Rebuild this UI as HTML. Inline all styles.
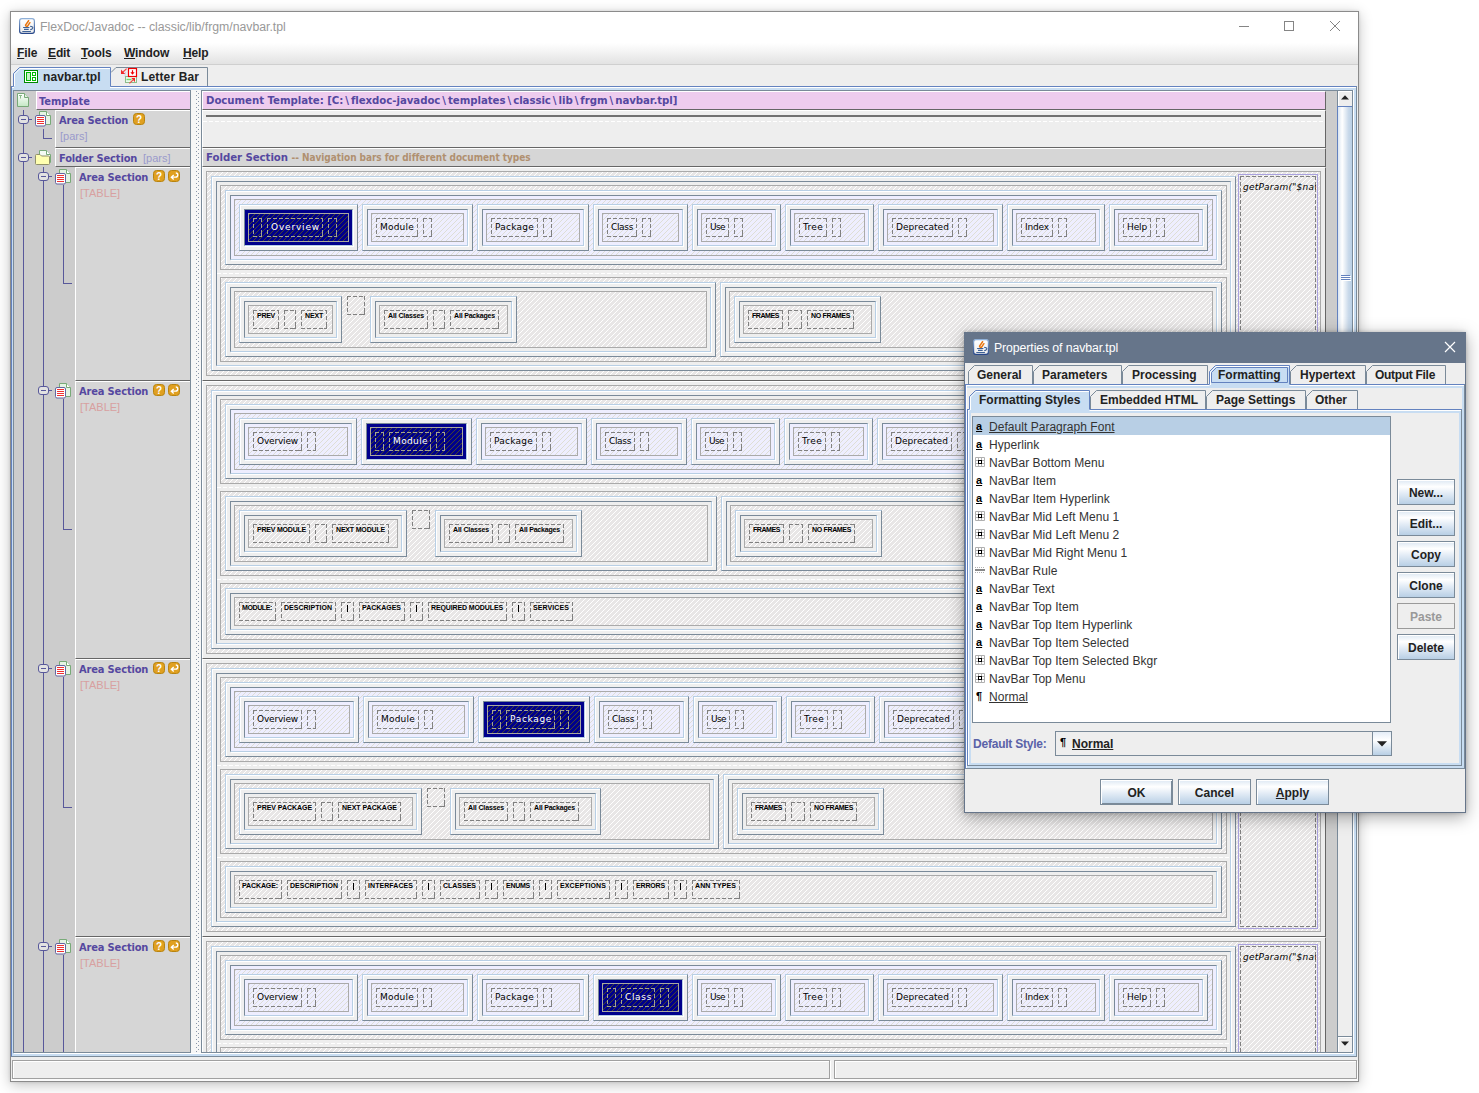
<!DOCTYPE html>
<html><head><meta charset="utf-8"><title>FlexDoc/Javadoc</title>
<style>
html,body{margin:0;padding:0;background:#fff;}
body{width:1479px;height:1093px;position:relative;overflow:hidden;font-family:"Liberation Sans",sans-serif;font-size:12px;color:#333}
.a{position:absolute;box-sizing:border-box}
.t{position:absolute;white-space:pre;line-height:1}
.fr{border:1px solid #aaa;background:#e8e6e6 repeating-linear-gradient(135deg,#e8e6e6 0,#e8e6e6 .4px,#fff .4px,#fff 1px,#e8e6e6 1px,#e8e6e6 3.535534px)}
.fl{border:1px solid #aaa;background:#eef repeating-linear-gradient(135deg,#eef 0,#eef .4px,#deded6 .4px,#deded6 1px,#eef 1px,#eef 3.535534px)}
.fn{border:1px solid #a9a9a0;background:#00008c repeating-linear-gradient(135deg,#00008c 0,#00008c .4px,#46432f .4px,#46432f 1px,#00008c 1px,#00008c 3.535534px)}
.tb{border:1px solid;border-color:#b8cfe5 #7a8a99 #7a8a99 #b8cfe5;background:#efefef;box-shadow:inset 1px 1px 0 #fff}
.td{border:1px solid;border-color:#7a8a99 #b8cfe5 #b8cfe5 #7a8a99;background:#eee;box-shadow:1px 1px 0 #fff}
.l{background:#eef}
.n{background:#00008c}
.d{background:
 linear-gradient(#808080,#808080) 100% 100%/3px 1px no-repeat,
 linear-gradient(#808080,#808080) 100% 100%/1px 3px no-repeat,
 repeating-linear-gradient(90deg,#808080 0,#808080 4px,transparent 4px,transparent 6px) 0 0/100% 1px no-repeat,
 repeating-linear-gradient(90deg,#808080 0,#808080 4px,transparent 4px,transparent 6px) 0 100%/100% 1px no-repeat,
 repeating-linear-gradient(180deg,#808080 0,#808080 4px,transparent 4px,transparent 6px) 0 0/1px 100% no-repeat,
 repeating-linear-gradient(180deg,#808080 0,#808080 4px,transparent 4px,transparent 6px) 100% 0/1px 100% no-repeat}
.dn{background:
 linear-gradient(#a2a294,#a2a294) 100% 100%/3px 1px no-repeat,
 linear-gradient(#a2a294,#a2a294) 100% 100%/1px 3px no-repeat,
 repeating-linear-gradient(90deg,#a2a294 0,#a2a294 4px,transparent 4px,transparent 6px) 0 0/100% 1px no-repeat,
 repeating-linear-gradient(90deg,#a2a294 0,#a2a294 4px,transparent 4px,transparent 6px) 0 100%/100% 1px no-repeat,
 repeating-linear-gradient(180deg,#a2a294 0,#a2a294 4px,transparent 4px,transparent 6px) 0 0/1px 100% no-repeat,
 repeating-linear-gradient(180deg,#a2a294 0,#a2a294 4px,transparent 4px,transparent 6px) 100% 0/1px 100% no-repeat}
.nv{font-family:"DejaVu Sans",sans-serif;font-size:9px;color:#000;letter-spacing:.3px}
.nw{color:#fff}
.sm{font-family:"Liberation Sans",sans-serif;font-weight:bold;font-size:7px;color:#000}
.hd{font-family:"DejaVu Sans Condensed","DejaVu Sans",sans-serif;font-weight:bold;font-size:11px;color:#5548a0}
.b{font-weight:bold}
.bs{margin:0 2px}
.wd{background:repeating-linear-gradient(90deg,#fff 0,#fff 4px,transparent 4px,transparent 6px)}
</style></head>
<body>
<div class="a" style="left:10px;top:11px;width:1349px;height:1071px;background:#eee;border:1px solid #8b8b8b;box-shadow:0 3px 13px rgba(0,0,0,.24),0 0 3px rgba(0,0,0,.12)"></div>
<div class="a" style="left:11px;top:12px;width:1347px;height:31px;background:#fff"></div>
<div class="a" style="left:11px;top:43px;width:1347px;height:21px;background:linear-gradient(#fff,#f4f4f4 40%,#e2e2e2)"></div>
<div class="a" style="left:11px;top:64px;width:1347px;height:1px;background:#cfcfcf"></div>
<svg class="a" style="left:19px;top:18px" width="16" height="16" viewBox="0 0 16 16"><defs><linearGradient id="jb1" x1="0" y1="0" x2="0" y2="1"><stop offset="0" stop-color="#8fb0d8"/><stop offset="1" stop-color="#27478a"/></linearGradient><linearGradient id="jf1" x1="0" y1="0" x2="0" y2="1"><stop offset="0" stop-color="#fff"/><stop offset="1" stop-color="#ececec"/></linearGradient></defs><rect x=".6" y=".6" width="14.800" height="14.800" rx="2.300" fill="url(#jf1)" stroke="url(#jb1)" stroke-width="1.200"/><path d="M9.600 2.700L6.500 7.100L7.600 8.800M10.900 4.700L8.400 8.400" fill="none" stroke="#e8740c" stroke-width="1.500" stroke-linecap="round" stroke-linejoin="round"/><path d="M4.100 9.500H10.400M5 11.400H9.700M3.300 13.500H11.900" fill="none" stroke="#3f6296" stroke-width="1.100"/><path d="M11.200 8.400Q14.300 8.500 13.700 10.100Q13.100 11.600 11.200 11.600" fill="none" stroke="#3f6296" stroke-width="1.200"/></svg>
<div class="t" style="left:40px;top:20px;font-size:12.3px;color:#999;letter-spacing:-.02px;line-height:15px">FlexDoc/Javadoc -- classic/lib/frgm/navbar.tpl</div>
<svg class="a" style="left:1230px;top:14px" width="120" height="24" viewBox="0 0 120 24"><g stroke="#858585" stroke-width="1" fill="none"><path d="M9 12.5h10"/><rect x="54.5" y="7.5" width="9" height="9"/><path d="M100 7l10 10M110 7l-10 10"/></g></svg>
<div class="t b" style="left:17px;top:46px;color:#222;line-height:14px;letter-spacing:-.12px"><u>F</u>ile</div>
<div class="t b" style="left:48px;top:46px;color:#222;line-height:14px;letter-spacing:-.12px"><u>E</u>dit</div>
<div class="t b" style="left:81px;top:46px;color:#222;line-height:14px;letter-spacing:-.12px"><u>T</u>ools</div>
<div class="t b" style="left:124px;top:46px;color:#222;line-height:14px;letter-spacing:-.12px"><u>W</u>indow</div>
<div class="t b" style="left:183px;top:46px;color:#222;line-height:14px;letter-spacing:-.12px"><u>H</u>elp</div>
<div class="a" style="left:11px;top:86px;width:1346px;height:971px;border:1px solid;border-color:#6382bf #7a8a99 #7a8a99 #6382bf;background:#c8ddf2"></div>
<div class="a" style="left:12px;top:87px;width:1344px;height:1px;background:#fff"></div>
<div class="a" style="left:14px;top:1053px;width:1340px;height:1px;background:#fff"></div>
<svg class="a" style="left:11px;top:66px" width="200" height="23" viewBox="0 0 200 23"><path d="M2.5 21V7.5L8.5 1.5H99.5V21" fill="#c8ddf2" stroke="none"/><path d="M3.5 21V8L9 2.5H99" fill="none" stroke="#fff"/><path d="M2.5 20.5V7.5L8.5 1.5H99.5V20.5" fill="none" stroke="#6382bf"/><path d="M100 6.5L105 1.5H196.5V20" fill="#eee" stroke="none"/><path d="M100 6.5L105 1.5H196.5V20" fill="none" stroke="#7a8a99"/><rect x="3" y="20" width="96" height="3" fill="#c8ddf2"/></svg>
<svg class="a" style="left:24px;top:70px" width="14" height="13" viewBox="0 0 14 13"><rect x=".5" y=".5" width="13" height="12" fill="#fff" stroke="#008800"/><rect x="2.5" y="2.5" width="4" height="8" fill="#c8f0c8" stroke="#00bb00"/><rect x="8.5" y="2.5" width="3" height="3" fill="#fff" stroke="#00bb00"/><rect x="8.5" y="7.5" width="3" height="3" fill="#fff" stroke="#00bb00"/></svg>
<div class="t b" style="left:43px;top:70px;color:#222;line-height:14px;letter-spacing:.1px">navbar.tpl</div>
<svg class="a" style="left:120px;top:67px" width="18" height="17" viewBox="0 0 18 17"><path d="M5.500 5.500Q4.500 9.500 6.500 12.500H9.500" fill="none" stroke="#b8b0e0" stroke-dasharray="1 1"/><rect x="5.500" y="9.500" width="11" height="6" fill="#ecfaec" stroke="#8cbc8c"/><path d="M6.500 12.500H11.500" stroke="#70e070" stroke-width="1.400"/><rect x="8.500" y="1.500" width="8" height="8" fill="#fff" stroke="#f00000" stroke-width="1.200"/><path d="M12.500 3.200V6.500" stroke="#f00000" stroke-width="1.200"/><path d="M10.400 5.200H14.600L12.500 7.800Z" fill="#f00000"/><path d="M1 2.600V7H5.200Z" fill="#f02828"/><path d="M2.800 5.200L6.600 1.600" stroke="#f04848" stroke-width="1.200"/><path d="M11.400 11H15V15.200Z" fill="#f02828"/><path d="M13.400 12.600L9.400 16.400" stroke="#f04848" stroke-width="1.200"/></svg>
<div class="t b" style="left:141px;top:70px;color:#222;line-height:14px;letter-spacing:.15px">Letter Bar</div>
<div class="a" style="left:13px;top:90px;width:178px;height:963px;background:#ccc;border:1px solid #7a8a99;overflow:hidden">
<div class="a" style="left:-14px;top:-91px;width:1479px;height:1093px">
<svg class="a" style="left:17px;top:93px" width="12" height="14" viewBox="0 0 12 14"><defs><linearGradient id="gT" x1="0" y1="0" x2="0" y2="1"><stop offset="0" stop-color="#fff"/><stop offset="1" stop-color="#c4e8c4"/></linearGradient></defs><path d="M.5.5H7.500L11.500 4.500V13.500H.5Z" fill="url(#gT)" stroke="#78a878"/><path d="M7.500.5V4.500H11.500" fill="#e0f0e0" stroke="#78a878"/><path d="M2 2.500h3M3.500 2.500v3" stroke="#8aba8a" stroke-width="1" fill="none"/></svg>
<div class="a" style="left:36px;top:91px;width:154px;height:19px;background:#eeccee;border-top:1px solid #fff;border-left:1px solid #fff;border-bottom:1px solid #666"></div>
<div class="t hd" style="left:39px;top:95px;line-height:13px">Template</div>
<div class="a" style="left:23px;top:110px;width:1px;height:944px;background:#58589a"></div>
<div class="a" style="left:55px;top:110px;width:135px;height:38px;background:#d6d6d6;border-top:1px solid #fff;border-left:1px solid #fff;border-bottom:1px solid #666"></div>
<div class="a" style="left:18px;top:115px;width:11px;height:9px;border:1px solid #58589a;border-radius:3px;background:#e2e2e2"></div>
<div class="a" style="left:21px;top:119px;width:5px;height:1px;background:#58589a"></div>
<div class="a" style="left:29px;top:119px;width:3px;height:1px;background:#58589a"></div>
<svg class="a" style="left:35px;top:111px" width="17" height="16" viewBox="0 0 17 16"><path d="M4.500.5H11.500L15.500 4.500V13.500H4.500Z" fill="#e4f4e4" stroke="#78aa78"/><path d="M11.500.5V4.500H15.500" fill="#fff" stroke="#78aa78"/><rect x=".5" y="4.500" width="10" height="10.500" rx="1.500" fill="#fff" stroke="#6464a0"/><path d="M2 6.500h7M2 8.500h7M2 10.500h7M2 12.500h7" stroke="#f03030" stroke-width="1"/></svg>
<div class="t hd" style="left:59px;top:114px;line-height:13px;letter-spacing:-.15px">Area Section</div>
<svg class="a" style="left:133px;top:113px" width="12" height="12" viewBox="0 0 12 12"><rect x=".5" y=".5" width="11" height="11" rx="3" fill="#e0a020" stroke="#b88410"/><text x="6" y="9.600" text-anchor="middle" font-family="Liberation Sans" font-weight="bold" font-size="10" fill="#fff">?</text></svg>
<div class="a" style="left:43px;top:129px;width:1px;height:10px;background:#58589a"></div>
<div class="a" style="left:43px;top:138px;width:9px;height:1px;background:#58589a"></div>
<div class="t" style="left:60px;top:130px;color:#9a9acc;font-size:11px;line-height:12px">[pars]</div>
<div class="a" style="left:55px;top:148px;width:135px;height:19px;background:#d6d6d6;border-top:1px solid #fff;border-left:1px solid #fff;border-bottom:1px solid #666"></div>
<div class="a" style="left:18px;top:153px;width:11px;height:9px;border:1px solid #58589a;border-radius:3px;background:#e2e2e2"></div>
<div class="a" style="left:21px;top:157px;width:5px;height:1px;background:#58589a"></div>
<div class="a" style="left:29px;top:157px;width:3px;height:1px;background:#58589a"></div>
<svg class="a" style="left:35px;top:150px" width="17" height="16" viewBox="0 0 17 16"><path d="M4.500.5H11.500L15.500 4.500V12.500H4.500Z" fill="#f4fbf4" stroke="#78aa78"/><path d="M11.500.5V4.500H15.500" fill="#fff" stroke="#78aa78"/><path d="M.5 5.500Q.5 4.500 1.500 4.500H5L6.500 6H13.500Q14.500 6 14.500 7V13.500Q14.500 14.500 13.500 14.500H1.500Q.5 14.500 .5 13.500Z" fill="#ffffb0" stroke="#90906a"/></svg>
<div class="t hd" style="left:59px;top:152px;line-height:13px;letter-spacing:-.15px">Folder Section</div>
<div class="t" style="left:143px;top:152px;color:#9a9acc;font-size:11px;line-height:12px">[pars]</div>
<div class="a" style="left:43px;top:167px;width:1px;height:887px;background:#58589a"></div>
<div class="a" style="left:75px;top:167px;width:115px;height:214px;background:#d6d6d6;border-top:1px solid #fff;border-left:1px solid #fff;border-bottom:1px solid #666"></div>
<div class="a" style="left:38px;top:172px;width:11px;height:9px;border:1px solid #58589a;border-radius:3px;background:#e2e2e2"></div>
<div class="a" style="left:41px;top:176px;width:5px;height:1px;background:#58589a"></div>
<div class="a" style="left:49px;top:176px;width:3px;height:1px;background:#58589a"></div>
<svg class="a" style="left:55px;top:169px" width="17" height="16" viewBox="0 0 17 16"><path d="M4.500.5H11.500L15.500 4.500V13.500H4.500Z" fill="#e4f4e4" stroke="#78aa78"/><path d="M11.500.5V4.500H15.500" fill="#fff" stroke="#78aa78"/><rect x=".5" y="4.500" width="10" height="10.500" rx="1.500" fill="#fff" stroke="#6464a0"/><path d="M2 6.500h7M2 8.500h7M2 10.500h7M2 12.500h7" stroke="#f03030" stroke-width="1"/></svg>
<div class="t hd" style="left:79px;top:171px;line-height:13px;letter-spacing:-.15px">Area Section</div>
<svg class="a" style="left:153px;top:170px" width="12" height="12" viewBox="0 0 12 12"><rect x=".5" y=".5" width="11" height="11" rx="3" fill="#e0a020" stroke="#b88410"/><text x="6" y="9.600" text-anchor="middle" font-family="Liberation Sans" font-weight="bold" font-size="10" fill="#fff">?</text></svg>
<svg class="a" style="left:168px;top:170px" width="12" height="12" viewBox="0 0 12 12"><rect x=".5" y=".5" width="11" height="11" rx="3" fill="#e0a020" stroke="#b88410"/><path d="M7.800 3Q9.800 3 9.800 5.100Q9.800 7.200 7.500 7.200H3.500M5.700 5L3.300 7.200L5.700 9.400" fill="none" stroke="#fff" stroke-width="1.300"/></svg>
<div class="t" style="left:80px;top:187px;color:#d8a0a0;font-size:11px;line-height:12px">[TABLE]</div>
<div class="a" style="left:63px;top:185px;width:1px;height:99px;background:#58589a"></div>
<div class="a" style="left:63px;top:283px;width:9px;height:1px;background:#58589a"></div>
<div class="a" style="left:75px;top:381px;width:115px;height:278px;background:#d6d6d6;border-top:1px solid #fff;border-left:1px solid #fff;border-bottom:1px solid #666"></div>
<div class="a" style="left:38px;top:386px;width:11px;height:9px;border:1px solid #58589a;border-radius:3px;background:#e2e2e2"></div>
<div class="a" style="left:41px;top:390px;width:5px;height:1px;background:#58589a"></div>
<div class="a" style="left:49px;top:390px;width:3px;height:1px;background:#58589a"></div>
<svg class="a" style="left:55px;top:383px" width="17" height="16" viewBox="0 0 17 16"><path d="M4.500.5H11.500L15.500 4.500V13.500H4.500Z" fill="#e4f4e4" stroke="#78aa78"/><path d="M11.500.5V4.500H15.500" fill="#fff" stroke="#78aa78"/><rect x=".5" y="4.500" width="10" height="10.500" rx="1.500" fill="#fff" stroke="#6464a0"/><path d="M2 6.500h7M2 8.500h7M2 10.500h7M2 12.500h7" stroke="#f03030" stroke-width="1"/></svg>
<div class="t hd" style="left:79px;top:385px;line-height:13px;letter-spacing:-.15px">Area Section</div>
<svg class="a" style="left:153px;top:384px" width="12" height="12" viewBox="0 0 12 12"><rect x=".5" y=".5" width="11" height="11" rx="3" fill="#e0a020" stroke="#b88410"/><text x="6" y="9.600" text-anchor="middle" font-family="Liberation Sans" font-weight="bold" font-size="10" fill="#fff">?</text></svg>
<svg class="a" style="left:168px;top:384px" width="12" height="12" viewBox="0 0 12 12"><rect x=".5" y=".5" width="11" height="11" rx="3" fill="#e0a020" stroke="#b88410"/><path d="M7.800 3Q9.800 3 9.800 5.100Q9.800 7.200 7.500 7.200H3.500M5.700 5L3.300 7.200L5.700 9.400" fill="none" stroke="#fff" stroke-width="1.300"/></svg>
<div class="t" style="left:80px;top:401px;color:#d8a0a0;font-size:11px;line-height:12px">[TABLE]</div>
<div class="a" style="left:63px;top:399px;width:1px;height:131px;background:#58589a"></div>
<div class="a" style="left:63px;top:529px;width:9px;height:1px;background:#58589a"></div>
<div class="a" style="left:75px;top:659px;width:115px;height:278px;background:#d6d6d6;border-top:1px solid #fff;border-left:1px solid #fff;border-bottom:1px solid #666"></div>
<div class="a" style="left:38px;top:664px;width:11px;height:9px;border:1px solid #58589a;border-radius:3px;background:#e2e2e2"></div>
<div class="a" style="left:41px;top:668px;width:5px;height:1px;background:#58589a"></div>
<div class="a" style="left:49px;top:668px;width:3px;height:1px;background:#58589a"></div>
<svg class="a" style="left:55px;top:661px" width="17" height="16" viewBox="0 0 17 16"><path d="M4.500.5H11.500L15.500 4.500V13.500H4.500Z" fill="#e4f4e4" stroke="#78aa78"/><path d="M11.500.5V4.500H15.500" fill="#fff" stroke="#78aa78"/><rect x=".5" y="4.500" width="10" height="10.500" rx="1.500" fill="#fff" stroke="#6464a0"/><path d="M2 6.500h7M2 8.500h7M2 10.500h7M2 12.500h7" stroke="#f03030" stroke-width="1"/></svg>
<div class="t hd" style="left:79px;top:663px;line-height:13px;letter-spacing:-.15px">Area Section</div>
<svg class="a" style="left:153px;top:662px" width="12" height="12" viewBox="0 0 12 12"><rect x=".5" y=".5" width="11" height="11" rx="3" fill="#e0a020" stroke="#b88410"/><text x="6" y="9.600" text-anchor="middle" font-family="Liberation Sans" font-weight="bold" font-size="10" fill="#fff">?</text></svg>
<svg class="a" style="left:168px;top:662px" width="12" height="12" viewBox="0 0 12 12"><rect x=".5" y=".5" width="11" height="11" rx="3" fill="#e0a020" stroke="#b88410"/><path d="M7.800 3Q9.800 3 9.800 5.100Q9.800 7.200 7.500 7.200H3.500M5.700 5L3.300 7.200L5.700 9.400" fill="none" stroke="#fff" stroke-width="1.300"/></svg>
<div class="t" style="left:80px;top:679px;color:#d8a0a0;font-size:11px;line-height:12px">[TABLE]</div>
<div class="a" style="left:63px;top:677px;width:1px;height:131px;background:#58589a"></div>
<div class="a" style="left:63px;top:807px;width:9px;height:1px;background:#58589a"></div>
<div class="a" style="left:75px;top:937px;width:115px;height:278px;background:#d6d6d6;border-top:1px solid #fff;border-left:1px solid #fff;border-bottom:1px solid #666"></div>
<div class="a" style="left:38px;top:942px;width:11px;height:9px;border:1px solid #58589a;border-radius:3px;background:#e2e2e2"></div>
<div class="a" style="left:41px;top:946px;width:5px;height:1px;background:#58589a"></div>
<div class="a" style="left:49px;top:946px;width:3px;height:1px;background:#58589a"></div>
<svg class="a" style="left:55px;top:939px" width="17" height="16" viewBox="0 0 17 16"><path d="M4.500.5H11.500L15.500 4.500V13.500H4.500Z" fill="#e4f4e4" stroke="#78aa78"/><path d="M11.500.5V4.500H15.500" fill="#fff" stroke="#78aa78"/><rect x=".5" y="4.500" width="10" height="10.500" rx="1.500" fill="#fff" stroke="#6464a0"/><path d="M2 6.500h7M2 8.500h7M2 10.500h7M2 12.500h7" stroke="#f03030" stroke-width="1"/></svg>
<div class="t hd" style="left:79px;top:941px;line-height:13px;letter-spacing:-.15px">Area Section</div>
<svg class="a" style="left:153px;top:940px" width="12" height="12" viewBox="0 0 12 12"><rect x=".5" y=".5" width="11" height="11" rx="3" fill="#e0a020" stroke="#b88410"/><text x="6" y="9.600" text-anchor="middle" font-family="Liberation Sans" font-weight="bold" font-size="10" fill="#fff">?</text></svg>
<svg class="a" style="left:168px;top:940px" width="12" height="12" viewBox="0 0 12 12"><rect x=".5" y=".5" width="11" height="11" rx="3" fill="#e0a020" stroke="#b88410"/><path d="M7.800 3Q9.800 3 9.800 5.100Q9.800 7.200 7.500 7.200H3.500M5.700 5L3.300 7.200L5.700 9.400" fill="none" stroke="#fff" stroke-width="1.300"/></svg>
<div class="t" style="left:80px;top:957px;color:#d8a0a0;font-size:11px;line-height:12px">[TABLE]</div>
<div class="a" style="left:63px;top:955px;width:1px;height:131px;background:#58589a"></div>
<div class="a" style="left:63px;top:1085px;width:9px;height:1px;background:#58589a"></div>
</div>
</div>
<div class="a" style="left:191px;top:90px;width:10px;height:963px;background:#f7f7f7"></div>
<div class="a" style="left:196px;top:91px;width:4px;height:962px;background:repeating-linear-gradient(180deg,#8a96aa 0,#8a96aa 1px,transparent 1px,transparent 4px) 0 0/1px 100% no-repeat,repeating-linear-gradient(180deg,transparent 0,transparent 2px,#8a96aa 2px,#8a96aa 3px,transparent 3px,transparent 4px) 2px 0/1px 100% no-repeat"></div>
<div class="a" style="left:201px;top:90px;width:1152px;height:963px;background:#ccc;border:1px solid #7a8a99;overflow:hidden">
<div class="a" style="left:-202px;top:-91px;width:1479px;height:1093px">
<div class="a" style="left:202px;top:91px;width:1124px;height:963px;overflow:hidden;background:#eee">
<div class="a" style="left:-202px;top:-91px;width:1479px;height:1093px">
<div class="a" style="left:202px;top:91px;width:1124px;height:19px;background:#eeccee;border-top:1px solid #fff;border-left:1px solid #fff;border-bottom:1px solid #666;border-right:1px solid #666"></div>
<div class="t hd" style="left:206px;top:94px;line-height:13px;font-family:'DejaVu Sans',sans-serif;font-size:10.200px;letter-spacing:-.05px">Document Template: [C:<span class="bs">\</span>flexdoc-javadoc<span class="bs">\</span>templates<span class="bs">\</span>classic<span class="bs">\</span>lib<span class="bs">\</span>frgm<span class="bs">\</span>navbar.tpl]</div>
<div class="a" style="left:202px;top:110px;width:1124px;height:38px;background:#eee;border-top:1px solid #fff;border-left:1px solid #fff;border-bottom:1px solid #666;border-right:1px solid #666"></div>
<div class="a" style="left:206px;top:115px;width:1115px;height:2px;background:#707070"></div>
<div class="a wd" style="left:203px;top:121px;width:1122px;height:1px;"></div>
<div class="a" style="left:202px;top:148px;width:1124px;height:19px;background:#d6d6d6;border-top:1px solid #fff;border-left:1px solid #fff;border-bottom:1px solid #666;border-right:1px solid #666"></div>
<div class="t hd" style="left:206px;top:151px;line-height:13px;font-family:'DejaVu Sans',sans-serif;font-size:10.200px;letter-spacing:-.05px">Folder Section <span style="color:#b09070;font:bold 10px 'DejaVu Sans Condensed',sans-serif;letter-spacing:-.05px">-- Navigation bars for different document types</span></div>
<div class="a" style="left:202px;top:167px;width:1124px;height:214px;background:#eee;border-top:1px solid #fff;border-left:1px solid #fff;border-bottom:1px solid #666;border-right:1px solid #666"></div>
<div class="a fr" style="left:206px;top:171px;width:1115px;height:205px;"></div>
<div class="a tb" style="left:211px;top:176px;width:1025px;height:195px;"></div>
<div class="a td" style="left:216px;top:181px;width:1015px;height:185px;"></div>
<div class="a" style="left:1238px;top:174px;width:80px;height:199px;border:1px solid #a9a1de"></div>
<div class="a d" style="left:1240px;top:176px;width:76px;height:195px;overflow:hidden"><div class="t" style="left:3px;top:5px;font:italic 9px/12px 'DejaVu Sans',sans-serif;color:#000;letter-spacing:.22px">getParam(&quot;$nav</div></div>
<div class="a fr" style="left:220px;top:185px;width:1007px;height:85px;"></div>
<div class="a tb" style="left:225px;top:190px;width:997px;height:75px;"></div>
<div class="a td l" style="left:230px;top:195px;width:987px;height:65px;"></div>
<div class="a fl" style="left:234px;top:199px;width:979px;height:57px;"></div>
<div class="a tb" style="left:239px;top:204px;width:119px;height:47px;"></div>
<div class="a td n" style="left:244px;top:209px;width:109px;height:37px;"></div>
<div class="a fn" style="left:248px;top:213px;width:101px;height:29px;"></div>
<div class="a dn" style="left:253px;top:218px;width:9px;height:19px;"></div>
<div class="a dn" style="left:267px;top:218px;width:56px;height:19px;"></div>
<div class="t nv nw" style="left:271px;top:221px;letter-spacing:0.83px;line-height:12px">Overview</div>
<div class="a dn" style="left:328px;top:218px;width:9px;height:19px;"></div>
<div class="a tb" style="left:362px;top:204px;width:111px;height:47px;"></div>
<div class="a td l" style="left:367px;top:209px;width:101px;height:37px;"></div>
<div class="a fl" style="left:371px;top:213px;width:93px;height:29px;"></div>
<div class="a d" style="left:376px;top:218px;width:42px;height:19px;"></div>
<div class="t nv" style="left:380px;top:221px;letter-spacing:0.21px;line-height:12px">Module</div>
<div class="a d" style="left:423px;top:218px;width:9px;height:19px;"></div>
<div class="a tb" style="left:477px;top:204px;width:112px;height:47px;"></div>
<div class="a td l" style="left:482px;top:209px;width:102px;height:37px;"></div>
<div class="a fl" style="left:486px;top:213px;width:94px;height:29px;"></div>
<div class="a d" style="left:491px;top:218px;width:47px;height:19px;"></div>
<div class="t nv" style="left:495px;top:221px;letter-spacing:0.24px;line-height:12px">Package</div>
<div class="a d" style="left:543px;top:218px;width:9px;height:19px;"></div>
<div class="a tb" style="left:593px;top:204px;width:95px;height:47px;"></div>
<div class="a td l" style="left:598px;top:209px;width:85px;height:37px;"></div>
<div class="a fl" style="left:602px;top:213px;width:77px;height:29px;"></div>
<div class="a d" style="left:607px;top:218px;width:30px;height:19px;"></div>
<div class="t nv" style="left:611px;top:221px;letter-spacing:-0.34px;line-height:12px">Class</div>
<div class="a d" style="left:642px;top:218px;width:9px;height:19px;"></div>
<div class="a tb" style="left:692px;top:204px;width:89px;height:47px;"></div>
<div class="a td l" style="left:697px;top:209px;width:79px;height:37px;"></div>
<div class="a fl" style="left:701px;top:213px;width:71px;height:29px;"></div>
<div class="a d" style="left:706px;top:218px;width:23px;height:19px;"></div>
<div class="t nv" style="left:710px;top:221px;letter-spacing:-0.61px;line-height:12px">Use</div>
<div class="a d" style="left:734px;top:218px;width:9px;height:19px;"></div>
<div class="a tb" style="left:785px;top:204px;width:89px;height:47px;"></div>
<div class="a td l" style="left:790px;top:209px;width:79px;height:37px;"></div>
<div class="a fl" style="left:794px;top:213px;width:71px;height:29px;"></div>
<div class="a d" style="left:799px;top:218px;width:28px;height:19px;"></div>
<div class="t nv" style="left:803px;top:221px;letter-spacing:0.31px;line-height:12px">Tree</div>
<div class="a d" style="left:832px;top:218px;width:9px;height:19px;"></div>
<div class="a tb" style="left:878px;top:204px;width:125px;height:47px;"></div>
<div class="a td l" style="left:883px;top:209px;width:115px;height:37px;"></div>
<div class="a fl" style="left:887px;top:213px;width:107px;height:29px;"></div>
<div class="a d" style="left:892px;top:218px;width:61px;height:19px;"></div>
<div class="t nv" style="left:896px;top:221px;letter-spacing:0.05px;line-height:12px">Deprecated</div>
<div class="a d" style="left:958px;top:218px;width:9px;height:19px;"></div>
<div class="a tb" style="left:1007px;top:204px;width:98px;height:47px;"></div>
<div class="a td l" style="left:1012px;top:209px;width:88px;height:37px;"></div>
<div class="a fl" style="left:1016px;top:213px;width:80px;height:29px;"></div>
<div class="a d" style="left:1021px;top:218px;width:32px;height:19px;"></div>
<div class="t nv" style="left:1025px;top:221px;letter-spacing:-0.16px;line-height:12px">Index</div>
<div class="a d" style="left:1058px;top:218px;width:9px;height:19px;"></div>
<div class="a tb" style="left:1109px;top:204px;width:99px;height:47px;"></div>
<div class="a td l" style="left:1114px;top:209px;width:89px;height:37px;"></div>
<div class="a fl" style="left:1118px;top:213px;width:81px;height:29px;"></div>
<div class="a d" style="left:1123px;top:218px;width:28px;height:19px;"></div>
<div class="t nv" style="left:1127px;top:221px;letter-spacing:-0.13px;line-height:12px">Help</div>
<div class="a d" style="left:1156px;top:218px;width:9px;height:19px;"></div>
<div class="a wd" style="left:217px;top:273px;width:1013px;height:1px;"></div>
<div class="a fr" style="left:220px;top:277px;width:1007px;height:85px;"></div>
<div class="a tb" style="left:225px;top:282px;width:491px;height:75px;"></div>
<div class="a td" style="left:230px;top:287px;width:481px;height:65px;"></div>
<div class="a fr" style="left:234px;top:291px;width:473px;height:57px;"></div>
<div class="a tb" style="left:720px;top:282px;width:502px;height:75px;"></div>
<div class="a td" style="left:725px;top:287px;width:492px;height:65px;"></div>
<div class="a fr" style="left:729px;top:291px;width:484px;height:57px;"></div>
<div class="a tb" style="left:239px;top:296px;width:103px;height:47px;"></div>
<div class="a td" style="left:244px;top:301px;width:93px;height:37px;"></div>
<div class="a fr" style="left:248px;top:305px;width:85px;height:29px;"></div>
<div class="a d" style="left:253px;top:310px;width:26px;height:19px;"></div>
<div class="t sm" style="left:257px;top:312px;letter-spacing:-0.27px;line-height:8px">PREV</div>
<div class="a d" style="left:284px;top:310px;width:12px;height:19px;"></div>
<div class="a d" style="left:301px;top:310px;width:26px;height:19px;"></div>
<div class="t sm" style="left:305px;top:312px;letter-spacing:-0.17px;line-height:8px">NEXT</div>
<div class="a d" style="left:347px;top:296px;width:18px;height:19px;"></div>
<div class="a tb" style="left:370px;top:296px;width:147px;height:47px;"></div>
<div class="a td" style="left:375px;top:301px;width:137px;height:37px;"></div>
<div class="a fr" style="left:379px;top:305px;width:129px;height:29px;"></div>
<div class="a d" style="left:384px;top:310px;width:44px;height:19px;"></div>
<div class="t sm" style="left:388px;top:312px;letter-spacing:-0.12px;line-height:8px">All Classes</div>
<div class="a d" style="left:433px;top:310px;width:12px;height:19px;"></div>
<div class="a d" style="left:450px;top:310px;width:49px;height:19px;"></div>
<div class="t sm" style="left:454px;top:312px;letter-spacing:-0.18px;line-height:8px">All Packages</div>
<div class="a tb" style="left:734px;top:296px;width:147px;height:47px;"></div>
<div class="a td" style="left:739px;top:301px;width:137px;height:37px;"></div>
<div class="a fr" style="left:743px;top:305px;width:129px;height:29px;"></div>
<div class="a d" style="left:748px;top:310px;width:35px;height:19px;"></div>
<div class="t sm" style="left:752px;top:312px;letter-spacing:-0.43px;line-height:8px">FRAMES</div>
<div class="a d" style="left:788px;top:310px;width:14px;height:19px;"></div>
<div class="a d" style="left:807px;top:310px;width:47px;height:19px;"></div>
<div class="t sm" style="left:811px;top:312px;letter-spacing:-0.33px;line-height:8px">NO FRAMES</div>
<div class="a" style="left:202px;top:381px;width:1124px;height:278px;background:#eee;border-top:1px solid #fff;border-left:1px solid #fff;border-bottom:1px solid #666;border-right:1px solid #666"></div>
<div class="a fr" style="left:206px;top:385px;width:1115px;height:269px;"></div>
<div class="a tb" style="left:211px;top:390px;width:1025px;height:259px;"></div>
<div class="a td" style="left:216px;top:395px;width:1015px;height:249px;"></div>
<div class="a" style="left:1238px;top:388px;width:80px;height:263px;border:1px solid #a9a1de"></div>
<div class="a d" style="left:1240px;top:390px;width:76px;height:259px;overflow:hidden"><div class="t" style="left:3px;top:5px;font:italic 9px/12px 'DejaVu Sans',sans-serif;color:#000;letter-spacing:.22px">getParam(&quot;$nav</div></div>
<div class="a fr" style="left:220px;top:399px;width:1007px;height:85px;"></div>
<div class="a tb" style="left:225px;top:404px;width:997px;height:75px;"></div>
<div class="a td l" style="left:230px;top:409px;width:987px;height:65px;"></div>
<div class="a fl" style="left:234px;top:413px;width:979px;height:57px;"></div>
<div class="a tb" style="left:239px;top:418px;width:118px;height:47px;"></div>
<div class="a td l" style="left:244px;top:423px;width:108px;height:37px;"></div>
<div class="a fl" style="left:248px;top:427px;width:100px;height:29px;"></div>
<div class="a d" style="left:253px;top:432px;width:49px;height:19px;"></div>
<div class="t nv" style="left:257px;top:435px;letter-spacing:-0.17px;line-height:12px">Overview</div>
<div class="a d" style="left:307px;top:432px;width:9px;height:19px;"></div>
<div class="a tb" style="left:361px;top:418px;width:111px;height:47px;"></div>
<div class="a td n" style="left:366px;top:423px;width:101px;height:37px;"></div>
<div class="a fn" style="left:370px;top:427px;width:93px;height:29px;"></div>
<div class="a dn" style="left:375px;top:432px;width:9px;height:19px;"></div>
<div class="a dn" style="left:389px;top:432px;width:42px;height:19px;"></div>
<div class="t nv nw" style="left:393px;top:435px;letter-spacing:0.38px;line-height:12px">Module</div>
<div class="a dn" style="left:436px;top:432px;width:9px;height:19px;"></div>
<div class="a tb" style="left:476px;top:418px;width:111px;height:47px;"></div>
<div class="a td l" style="left:481px;top:423px;width:101px;height:37px;"></div>
<div class="a fl" style="left:485px;top:427px;width:93px;height:29px;"></div>
<div class="a d" style="left:490px;top:432px;width:47px;height:19px;"></div>
<div class="t nv" style="left:494px;top:435px;letter-spacing:0.24px;line-height:12px">Package</div>
<div class="a d" style="left:542px;top:432px;width:9px;height:19px;"></div>
<div class="a tb" style="left:591px;top:418px;width:96px;height:47px;"></div>
<div class="a td l" style="left:596px;top:423px;width:86px;height:37px;"></div>
<div class="a fl" style="left:600px;top:427px;width:78px;height:29px;"></div>
<div class="a d" style="left:605px;top:432px;width:30px;height:19px;"></div>
<div class="t nv" style="left:609px;top:435px;letter-spacing:-0.34px;line-height:12px">Class</div>
<div class="a d" style="left:640px;top:432px;width:9px;height:19px;"></div>
<div class="a tb" style="left:691px;top:418px;width:89px;height:47px;"></div>
<div class="a td l" style="left:696px;top:423px;width:79px;height:37px;"></div>
<div class="a fl" style="left:700px;top:427px;width:71px;height:29px;"></div>
<div class="a d" style="left:705px;top:432px;width:23px;height:19px;"></div>
<div class="t nv" style="left:709px;top:435px;letter-spacing:-0.61px;line-height:12px">Use</div>
<div class="a d" style="left:733px;top:432px;width:9px;height:19px;"></div>
<div class="a tb" style="left:784px;top:418px;width:89px;height:47px;"></div>
<div class="a td l" style="left:789px;top:423px;width:79px;height:37px;"></div>
<div class="a fl" style="left:793px;top:427px;width:71px;height:29px;"></div>
<div class="a d" style="left:798px;top:432px;width:28px;height:19px;"></div>
<div class="t nv" style="left:802px;top:435px;letter-spacing:0.31px;line-height:12px">Tree</div>
<div class="a d" style="left:831px;top:432px;width:9px;height:19px;"></div>
<div class="a tb" style="left:877px;top:418px;width:125px;height:47px;"></div>
<div class="a td l" style="left:882px;top:423px;width:115px;height:37px;"></div>
<div class="a fl" style="left:886px;top:427px;width:107px;height:29px;"></div>
<div class="a d" style="left:891px;top:432px;width:61px;height:19px;"></div>
<div class="t nv" style="left:895px;top:435px;letter-spacing:0.05px;line-height:12px">Deprecated</div>
<div class="a d" style="left:957px;top:432px;width:9px;height:19px;"></div>
<div class="a tb" style="left:1006px;top:418px;width:98px;height:47px;"></div>
<div class="a td l" style="left:1011px;top:423px;width:88px;height:37px;"></div>
<div class="a fl" style="left:1015px;top:427px;width:80px;height:29px;"></div>
<div class="a d" style="left:1020px;top:432px;width:32px;height:19px;"></div>
<div class="t nv" style="left:1024px;top:435px;letter-spacing:-0.16px;line-height:12px">Index</div>
<div class="a d" style="left:1057px;top:432px;width:9px;height:19px;"></div>
<div class="a tb" style="left:1108px;top:418px;width:100px;height:47px;"></div>
<div class="a td l" style="left:1113px;top:423px;width:90px;height:37px;"></div>
<div class="a fl" style="left:1117px;top:427px;width:82px;height:29px;"></div>
<div class="a d" style="left:1122px;top:432px;width:28px;height:19px;"></div>
<div class="t nv" style="left:1126px;top:435px;letter-spacing:-0.13px;line-height:12px">Help</div>
<div class="a d" style="left:1155px;top:432px;width:9px;height:19px;"></div>
<div class="a wd" style="left:217px;top:487px;width:1013px;height:1px;"></div>
<div class="a fr" style="left:220px;top:491px;width:1007px;height:85px;"></div>
<div class="a tb" style="left:225px;top:496px;width:492px;height:75px;"></div>
<div class="a td" style="left:230px;top:501px;width:482px;height:65px;"></div>
<div class="a fr" style="left:234px;top:505px;width:474px;height:57px;"></div>
<div class="a tb" style="left:721px;top:496px;width:501px;height:75px;"></div>
<div class="a td" style="left:726px;top:501px;width:491px;height:65px;"></div>
<div class="a fr" style="left:730px;top:505px;width:483px;height:57px;"></div>
<div class="a tb" style="left:239px;top:510px;width:168px;height:47px;"></div>
<div class="a td" style="left:244px;top:515px;width:158px;height:37px;"></div>
<div class="a fr" style="left:248px;top:519px;width:150px;height:29px;"></div>
<div class="a d" style="left:253px;top:524px;width:57px;height:19px;"></div>
<div class="t sm" style="left:257px;top:526px;letter-spacing:-0.21px;line-height:8px">PREV MODULE</div>
<div class="a d" style="left:315px;top:524px;width:12px;height:19px;"></div>
<div class="a d" style="left:332px;top:524px;width:57px;height:19px;"></div>
<div class="t sm" style="left:336px;top:526px;letter-spacing:-0.18px;line-height:8px">NEXT MODULE</div>
<div class="a d" style="left:412px;top:510px;width:18px;height:19px;"></div>
<div class="a tb" style="left:435px;top:510px;width:147px;height:47px;"></div>
<div class="a td" style="left:440px;top:515px;width:137px;height:37px;"></div>
<div class="a fr" style="left:444px;top:519px;width:129px;height:29px;"></div>
<div class="a d" style="left:449px;top:524px;width:44px;height:19px;"></div>
<div class="t sm" style="left:453px;top:526px;letter-spacing:-0.12px;line-height:8px">All Classes</div>
<div class="a d" style="left:498px;top:524px;width:12px;height:19px;"></div>
<div class="a d" style="left:515px;top:524px;width:49px;height:19px;"></div>
<div class="t sm" style="left:519px;top:526px;letter-spacing:-0.18px;line-height:8px">All Packages</div>
<div class="a tb" style="left:735px;top:510px;width:147px;height:47px;"></div>
<div class="a td" style="left:740px;top:515px;width:137px;height:37px;"></div>
<div class="a fr" style="left:744px;top:519px;width:129px;height:29px;"></div>
<div class="a d" style="left:749px;top:524px;width:35px;height:19px;"></div>
<div class="t sm" style="left:753px;top:526px;letter-spacing:-0.43px;line-height:8px">FRAMES</div>
<div class="a d" style="left:789px;top:524px;width:14px;height:19px;"></div>
<div class="a d" style="left:808px;top:524px;width:47px;height:19px;"></div>
<div class="t sm" style="left:812px;top:526px;letter-spacing:-0.33px;line-height:8px">NO FRAMES</div>
<div class="a wd" style="left:217px;top:579px;width:1013px;height:1px;"></div>
<div class="a fr" style="left:220px;top:583px;width:1007px;height:57px;"></div>
<div class="a tb" style="left:225px;top:588px;width:997px;height:47px;"></div>
<div class="a td" style="left:230px;top:593px;width:987px;height:37px;"></div>
<div class="a fr" style="left:234px;top:597px;width:979px;height:29px;"></div>
<div class="a d" style="left:239px;top:602px;width:37px;height:19px;"></div>
<div class="t sm" style="left:242px;top:604px;letter-spacing:-0.38px;line-height:8px">MODULE:</div>
<div class="a d" style="left:281px;top:602px;width:55px;height:19px;"></div>
<div class="t sm" style="left:284px;top:604px;letter-spacing:0.01px;line-height:8px">DESCRIPTION</div>
<div class="a d" style="left:341px;top:602px;width:13px;height:19px;"></div>
<div class="a" style="left:347px;top:605px;width:1px;height:7px;background:#000"></div>
<div class="a d" style="left:359px;top:602px;width:46px;height:19px;"></div>
<div class="t sm" style="left:362px;top:604px;letter-spacing:-0.02px;line-height:8px">PACKAGES</div>
<div class="a d" style="left:410px;top:602px;width:13px;height:19px;"></div>
<div class="a" style="left:416px;top:605px;width:1px;height:7px;background:#000"></div>
<div class="a d" style="left:428px;top:602px;width:79px;height:19px;"></div>
<div class="t sm" style="left:431px;top:604px;letter-spacing:-0.12px;line-height:8px">REQUIRED MODULES</div>
<div class="a d" style="left:512px;top:602px;width:13px;height:19px;"></div>
<div class="a" style="left:518px;top:605px;width:1px;height:7px;background:#000"></div>
<div class="a d" style="left:530px;top:602px;width:43px;height:19px;"></div>
<div class="t sm" style="left:533px;top:604px;letter-spacing:0.09px;line-height:8px">SERVICES</div>
<div class="a" style="left:202px;top:659px;width:1124px;height:278px;background:#eee;border-top:1px solid #fff;border-left:1px solid #fff;border-bottom:1px solid #666;border-right:1px solid #666"></div>
<div class="a fr" style="left:206px;top:663px;width:1115px;height:269px;"></div>
<div class="a tb" style="left:211px;top:668px;width:1025px;height:259px;"></div>
<div class="a td" style="left:216px;top:673px;width:1015px;height:249px;"></div>
<div class="a" style="left:1238px;top:666px;width:80px;height:263px;border:1px solid #a9a1de"></div>
<div class="a d" style="left:1240px;top:668px;width:76px;height:259px;overflow:hidden"><div class="t" style="left:3px;top:5px;font:italic 9px/12px 'DejaVu Sans',sans-serif;color:#000;letter-spacing:.22px">getParam(&quot;$nav</div></div>
<div class="a fr" style="left:220px;top:677px;width:1007px;height:85px;"></div>
<div class="a tb" style="left:225px;top:682px;width:997px;height:75px;"></div>
<div class="a td l" style="left:230px;top:687px;width:987px;height:65px;"></div>
<div class="a fl" style="left:234px;top:691px;width:979px;height:57px;"></div>
<div class="a tb" style="left:239px;top:696px;width:120px;height:47px;"></div>
<div class="a td l" style="left:244px;top:701px;width:110px;height:37px;"></div>
<div class="a fl" style="left:248px;top:705px;width:102px;height:29px;"></div>
<div class="a d" style="left:253px;top:710px;width:49px;height:19px;"></div>
<div class="t nv" style="left:257px;top:713px;letter-spacing:-0.17px;line-height:12px">Overview</div>
<div class="a d" style="left:307px;top:710px;width:9px;height:19px;"></div>
<div class="a tb" style="left:363px;top:696px;width:111px;height:47px;"></div>
<div class="a td l" style="left:368px;top:701px;width:101px;height:37px;"></div>
<div class="a fl" style="left:372px;top:705px;width:93px;height:29px;"></div>
<div class="a d" style="left:377px;top:710px;width:42px;height:19px;"></div>
<div class="t nv" style="left:381px;top:713px;letter-spacing:0.21px;line-height:12px">Module</div>
<div class="a d" style="left:424px;top:710px;width:9px;height:19px;"></div>
<div class="a tb" style="left:478px;top:696px;width:112px;height:47px;"></div>
<div class="a td n" style="left:483px;top:701px;width:102px;height:37px;"></div>
<div class="a fn" style="left:487px;top:705px;width:94px;height:29px;"></div>
<div class="a dn" style="left:492px;top:710px;width:9px;height:19px;"></div>
<div class="a dn" style="left:506px;top:710px;width:49px;height:19px;"></div>
<div class="t nv nw" style="left:510px;top:713px;letter-spacing:0.67px;line-height:12px">Package</div>
<div class="a dn" style="left:560px;top:710px;width:9px;height:19px;"></div>
<div class="a tb" style="left:594px;top:696px;width:95px;height:47px;"></div>
<div class="a td l" style="left:599px;top:701px;width:85px;height:37px;"></div>
<div class="a fl" style="left:603px;top:705px;width:77px;height:29px;"></div>
<div class="a d" style="left:608px;top:710px;width:30px;height:19px;"></div>
<div class="t nv" style="left:612px;top:713px;letter-spacing:-0.34px;line-height:12px">Class</div>
<div class="a d" style="left:643px;top:710px;width:9px;height:19px;"></div>
<div class="a tb" style="left:693px;top:696px;width:89px;height:47px;"></div>
<div class="a td l" style="left:698px;top:701px;width:79px;height:37px;"></div>
<div class="a fl" style="left:702px;top:705px;width:71px;height:29px;"></div>
<div class="a d" style="left:707px;top:710px;width:23px;height:19px;"></div>
<div class="t nv" style="left:711px;top:713px;letter-spacing:-0.61px;line-height:12px">Use</div>
<div class="a d" style="left:735px;top:710px;width:9px;height:19px;"></div>
<div class="a tb" style="left:786px;top:696px;width:89px;height:47px;"></div>
<div class="a td l" style="left:791px;top:701px;width:79px;height:37px;"></div>
<div class="a fl" style="left:795px;top:705px;width:71px;height:29px;"></div>
<div class="a d" style="left:800px;top:710px;width:28px;height:19px;"></div>
<div class="t nv" style="left:804px;top:713px;letter-spacing:0.31px;line-height:12px">Tree</div>
<div class="a d" style="left:833px;top:710px;width:9px;height:19px;"></div>
<div class="a tb" style="left:879px;top:696px;width:125px;height:47px;"></div>
<div class="a td l" style="left:884px;top:701px;width:115px;height:37px;"></div>
<div class="a fl" style="left:888px;top:705px;width:107px;height:29px;"></div>
<div class="a d" style="left:893px;top:710px;width:61px;height:19px;"></div>
<div class="t nv" style="left:897px;top:713px;letter-spacing:0.05px;line-height:12px">Deprecated</div>
<div class="a d" style="left:959px;top:710px;width:9px;height:19px;"></div>
<div class="a tb" style="left:1008px;top:696px;width:98px;height:47px;"></div>
<div class="a td l" style="left:1013px;top:701px;width:88px;height:37px;"></div>
<div class="a fl" style="left:1017px;top:705px;width:80px;height:29px;"></div>
<div class="a d" style="left:1022px;top:710px;width:32px;height:19px;"></div>
<div class="t nv" style="left:1026px;top:713px;letter-spacing:-0.16px;line-height:12px">Index</div>
<div class="a d" style="left:1059px;top:710px;width:9px;height:19px;"></div>
<div class="a tb" style="left:1110px;top:696px;width:98px;height:47px;"></div>
<div class="a td l" style="left:1115px;top:701px;width:88px;height:37px;"></div>
<div class="a fl" style="left:1119px;top:705px;width:80px;height:29px;"></div>
<div class="a d" style="left:1124px;top:710px;width:28px;height:19px;"></div>
<div class="t nv" style="left:1128px;top:713px;letter-spacing:-0.13px;line-height:12px">Help</div>
<div class="a d" style="left:1157px;top:710px;width:9px;height:19px;"></div>
<div class="a wd" style="left:217px;top:765px;width:1013px;height:1px;"></div>
<div class="a fr" style="left:220px;top:769px;width:1007px;height:85px;"></div>
<div class="a tb" style="left:225px;top:774px;width:494px;height:75px;"></div>
<div class="a td" style="left:230px;top:779px;width:484px;height:65px;"></div>
<div class="a fr" style="left:234px;top:783px;width:476px;height:57px;"></div>
<div class="a tb" style="left:723px;top:774px;width:499px;height:75px;"></div>
<div class="a td" style="left:728px;top:779px;width:489px;height:65px;"></div>
<div class="a fr" style="left:732px;top:783px;width:481px;height:57px;"></div>
<div class="a tb" style="left:239px;top:788px;width:183px;height:47px;"></div>
<div class="a td" style="left:244px;top:793px;width:173px;height:37px;"></div>
<div class="a fr" style="left:248px;top:797px;width:165px;height:29px;"></div>
<div class="a d" style="left:253px;top:802px;width:63px;height:19px;"></div>
<div class="t sm" style="left:257px;top:804px;letter-spacing:-0.04px;line-height:8px">PREV PACKAGE</div>
<div class="a d" style="left:321px;top:802px;width:12px;height:19px;"></div>
<div class="a d" style="left:338px;top:802px;width:63px;height:19px;"></div>
<div class="t sm" style="left:342px;top:804px;letter-spacing:-0.01px;line-height:8px">NEXT PACKAGE</div>
<div class="a d" style="left:427px;top:788px;width:18px;height:19px;"></div>
<div class="a tb" style="left:450px;top:788px;width:151px;height:47px;"></div>
<div class="a td" style="left:455px;top:793px;width:141px;height:37px;"></div>
<div class="a fr" style="left:459px;top:797px;width:133px;height:29px;"></div>
<div class="a d" style="left:464px;top:802px;width:44px;height:19px;"></div>
<div class="t sm" style="left:468px;top:804px;letter-spacing:-0.12px;line-height:8px">All Classes</div>
<div class="a d" style="left:513px;top:802px;width:12px;height:19px;"></div>
<div class="a d" style="left:530px;top:802px;width:49px;height:19px;"></div>
<div class="t sm" style="left:534px;top:804px;letter-spacing:-0.18px;line-height:8px">All Packages</div>
<div class="a tb" style="left:737px;top:788px;width:147px;height:47px;"></div>
<div class="a td" style="left:742px;top:793px;width:137px;height:37px;"></div>
<div class="a fr" style="left:746px;top:797px;width:129px;height:29px;"></div>
<div class="a d" style="left:751px;top:802px;width:35px;height:19px;"></div>
<div class="t sm" style="left:755px;top:804px;letter-spacing:-0.43px;line-height:8px">FRAMES</div>
<div class="a d" style="left:791px;top:802px;width:14px;height:19px;"></div>
<div class="a d" style="left:810px;top:802px;width:47px;height:19px;"></div>
<div class="t sm" style="left:814px;top:804px;letter-spacing:-0.33px;line-height:8px">NO FRAMES</div>
<div class="a wd" style="left:217px;top:857px;width:1013px;height:1px;"></div>
<div class="a fr" style="left:220px;top:861px;width:1007px;height:57px;"></div>
<div class="a tb" style="left:225px;top:866px;width:997px;height:47px;"></div>
<div class="a td" style="left:230px;top:871px;width:987px;height:37px;"></div>
<div class="a fr" style="left:234px;top:875px;width:979px;height:29px;"></div>
<div class="a d" style="left:239px;top:880px;width:43px;height:19px;"></div>
<div class="t sm" style="left:242px;top:882px;letter-spacing:-0.10px;line-height:8px">PACKAGE:</div>
<div class="a d" style="left:287px;top:880px;width:55px;height:19px;"></div>
<div class="t sm" style="left:290px;top:882px;letter-spacing:0.01px;line-height:8px">DESCRIPTION</div>
<div class="a d" style="left:347px;top:880px;width:13px;height:19px;"></div>
<div class="a" style="left:353px;top:883px;width:1px;height:7px;background:#000"></div>
<div class="a d" style="left:365px;top:880px;width:52px;height:19px;"></div>
<div class="t sm" style="left:368px;top:882px;letter-spacing:0.07px;line-height:8px">INTERFACES</div>
<div class="a d" style="left:422px;top:880px;width:13px;height:19px;"></div>
<div class="a" style="left:428px;top:883px;width:1px;height:7px;background:#000"></div>
<div class="a d" style="left:440px;top:880px;width:40px;height:19px;"></div>
<div class="t sm" style="left:443px;top:882px;letter-spacing:-0.01px;line-height:8px">CLASSES</div>
<div class="a d" style="left:485px;top:880px;width:13px;height:19px;"></div>
<div class="a" style="left:491px;top:883px;width:1px;height:7px;background:#000"></div>
<div class="a d" style="left:503px;top:880px;width:31px;height:19px;"></div>
<div class="t sm" style="left:506px;top:882px;letter-spacing:-0.26px;line-height:8px">ENUMS</div>
<div class="a d" style="left:539px;top:880px;width:13px;height:19px;"></div>
<div class="a" style="left:545px;top:883px;width:1px;height:7px;background:#000"></div>
<div class="a d" style="left:557px;top:880px;width:53px;height:19px;"></div>
<div class="t sm" style="left:560px;top:882px;letter-spacing:0.09px;line-height:8px">EXCEPTIONS</div>
<div class="a d" style="left:615px;top:880px;width:13px;height:19px;"></div>
<div class="a" style="left:621px;top:883px;width:1px;height:7px;background:#000"></div>
<div class="a d" style="left:633px;top:880px;width:36px;height:19px;"></div>
<div class="t sm" style="left:636px;top:882px;letter-spacing:-0.16px;line-height:8px">ERRORS</div>
<div class="a d" style="left:674px;top:880px;width:13px;height:19px;"></div>
<div class="a" style="left:680px;top:883px;width:1px;height:7px;background:#000"></div>
<div class="a d" style="left:692px;top:880px;width:48px;height:19px;"></div>
<div class="t sm" style="left:695px;top:882px;letter-spacing:0.10px;line-height:8px">ANN TYPES</div>
<div class="a" style="left:202px;top:937px;width:1124px;height:278px;background:#eee;border-top:1px solid #fff;border-left:1px solid #fff;border-bottom:1px solid #666;border-right:1px solid #666"></div>
<div class="a fr" style="left:206px;top:941px;width:1115px;height:269px;"></div>
<div class="a tb" style="left:211px;top:946px;width:1025px;height:259px;"></div>
<div class="a td" style="left:216px;top:951px;width:1015px;height:249px;"></div>
<div class="a" style="left:1238px;top:944px;width:80px;height:263px;border:1px solid #a9a1de"></div>
<div class="a d" style="left:1240px;top:946px;width:76px;height:259px;overflow:hidden"><div class="t" style="left:3px;top:5px;font:italic 9px/12px 'DejaVu Sans',sans-serif;color:#000;letter-spacing:.22px">getParam(&quot;$nav</div></div>
<div class="a fr" style="left:220px;top:955px;width:1007px;height:85px;"></div>
<div class="a tb" style="left:225px;top:960px;width:997px;height:75px;"></div>
<div class="a td l" style="left:230px;top:965px;width:987px;height:65px;"></div>
<div class="a fl" style="left:234px;top:969px;width:979px;height:57px;"></div>
<div class="a tb" style="left:239px;top:974px;width:119px;height:47px;"></div>
<div class="a td l" style="left:244px;top:979px;width:109px;height:37px;"></div>
<div class="a fl" style="left:248px;top:983px;width:101px;height:29px;"></div>
<div class="a d" style="left:253px;top:988px;width:49px;height:19px;"></div>
<div class="t nv" style="left:257px;top:991px;letter-spacing:-0.17px;line-height:12px">Overview</div>
<div class="a d" style="left:307px;top:988px;width:9px;height:19px;"></div>
<div class="a tb" style="left:362px;top:974px;width:111px;height:47px;"></div>
<div class="a td l" style="left:367px;top:979px;width:101px;height:37px;"></div>
<div class="a fl" style="left:371px;top:983px;width:93px;height:29px;"></div>
<div class="a d" style="left:376px;top:988px;width:42px;height:19px;"></div>
<div class="t nv" style="left:380px;top:991px;letter-spacing:0.21px;line-height:12px">Module</div>
<div class="a d" style="left:423px;top:988px;width:9px;height:19px;"></div>
<div class="a tb" style="left:477px;top:974px;width:112px;height:47px;"></div>
<div class="a td l" style="left:482px;top:979px;width:102px;height:37px;"></div>
<div class="a fl" style="left:486px;top:983px;width:94px;height:29px;"></div>
<div class="a d" style="left:491px;top:988px;width:47px;height:19px;"></div>
<div class="t nv" style="left:495px;top:991px;letter-spacing:0.24px;line-height:12px">Package</div>
<div class="a d" style="left:543px;top:988px;width:9px;height:19px;"></div>
<div class="a tb" style="left:593px;top:974px;width:95px;height:47px;"></div>
<div class="a td n" style="left:598px;top:979px;width:85px;height:37px;"></div>
<div class="a fn" style="left:602px;top:983px;width:77px;height:29px;"></div>
<div class="a dn" style="left:607px;top:988px;width:9px;height:19px;"></div>
<div class="a dn" style="left:621px;top:988px;width:34px;height:19px;"></div>
<div class="t nv nw" style="left:625px;top:991px;letter-spacing:0.66px;line-height:12px">Class</div>
<div class="a dn" style="left:660px;top:988px;width:9px;height:19px;"></div>
<div class="a tb" style="left:692px;top:974px;width:89px;height:47px;"></div>
<div class="a td l" style="left:697px;top:979px;width:79px;height:37px;"></div>
<div class="a fl" style="left:701px;top:983px;width:71px;height:29px;"></div>
<div class="a d" style="left:706px;top:988px;width:23px;height:19px;"></div>
<div class="t nv" style="left:710px;top:991px;letter-spacing:-0.61px;line-height:12px">Use</div>
<div class="a d" style="left:734px;top:988px;width:9px;height:19px;"></div>
<div class="a tb" style="left:785px;top:974px;width:89px;height:47px;"></div>
<div class="a td l" style="left:790px;top:979px;width:79px;height:37px;"></div>
<div class="a fl" style="left:794px;top:983px;width:71px;height:29px;"></div>
<div class="a d" style="left:799px;top:988px;width:28px;height:19px;"></div>
<div class="t nv" style="left:803px;top:991px;letter-spacing:0.31px;line-height:12px">Tree</div>
<div class="a d" style="left:832px;top:988px;width:9px;height:19px;"></div>
<div class="a tb" style="left:878px;top:974px;width:125px;height:47px;"></div>
<div class="a td l" style="left:883px;top:979px;width:115px;height:37px;"></div>
<div class="a fl" style="left:887px;top:983px;width:107px;height:29px;"></div>
<div class="a d" style="left:892px;top:988px;width:61px;height:19px;"></div>
<div class="t nv" style="left:896px;top:991px;letter-spacing:0.05px;line-height:12px">Deprecated</div>
<div class="a d" style="left:958px;top:988px;width:9px;height:19px;"></div>
<div class="a tb" style="left:1007px;top:974px;width:98px;height:47px;"></div>
<div class="a td l" style="left:1012px;top:979px;width:88px;height:37px;"></div>
<div class="a fl" style="left:1016px;top:983px;width:80px;height:29px;"></div>
<div class="a d" style="left:1021px;top:988px;width:32px;height:19px;"></div>
<div class="t nv" style="left:1025px;top:991px;letter-spacing:-0.16px;line-height:12px">Index</div>
<div class="a d" style="left:1058px;top:988px;width:9px;height:19px;"></div>
<div class="a tb" style="left:1109px;top:974px;width:99px;height:47px;"></div>
<div class="a td l" style="left:1114px;top:979px;width:89px;height:37px;"></div>
<div class="a fl" style="left:1118px;top:983px;width:81px;height:29px;"></div>
<div class="a d" style="left:1123px;top:988px;width:28px;height:19px;"></div>
<div class="t nv" style="left:1127px;top:991px;letter-spacing:-0.13px;line-height:12px">Help</div>
<div class="a d" style="left:1156px;top:988px;width:9px;height:19px;"></div>
<div class="a wd" style="left:217px;top:1043px;width:1013px;height:1px;"></div>
<div class="a fr" style="left:220px;top:1047px;width:1007px;height:85px;"></div>
<div class="a tb" style="left:225px;top:1052px;width:491px;height:75px;"></div>
<div class="a td" style="left:230px;top:1057px;width:481px;height:65px;"></div>
<div class="a fr" style="left:234px;top:1061px;width:473px;height:57px;"></div>
<div class="a tb" style="left:720px;top:1052px;width:502px;height:75px;"></div>
<div class="a td" style="left:725px;top:1057px;width:492px;height:65px;"></div>
<div class="a fr" style="left:729px;top:1061px;width:484px;height:57px;"></div>
<div class="a tb" style="left:239px;top:1066px;width:159px;height:47px;"></div>
<div class="a td" style="left:244px;top:1071px;width:149px;height:37px;"></div>
<div class="a fr" style="left:248px;top:1075px;width:141px;height:29px;"></div>
<div class="a d" style="left:253px;top:1080px;width:51px;height:19px;"></div>
<div class="t sm" style="left:257px;top:1082px;letter-spacing:-0.17px;line-height:8px">PREV CLASS</div>
<div class="a d" style="left:309px;top:1080px;width:12px;height:19px;"></div>
<div class="a d" style="left:326px;top:1080px;width:57px;height:19px;"></div>
<div class="t sm" style="left:330px;top:1082px;letter-spacing:0.47px;line-height:8px">NEXT CLASS</div>
<div class="a d" style="left:403px;top:1066px;width:18px;height:19px;"></div>
<div class="a tb" style="left:426px;top:1066px;width:147px;height:47px;"></div>
<div class="a td" style="left:431px;top:1071px;width:137px;height:37px;"></div>
<div class="a fr" style="left:435px;top:1075px;width:129px;height:29px;"></div>
<div class="a d" style="left:440px;top:1080px;width:44px;height:19px;"></div>
<div class="t sm" style="left:444px;top:1082px;letter-spacing:-0.12px;line-height:8px">All Classes</div>
<div class="a d" style="left:489px;top:1080px;width:12px;height:19px;"></div>
<div class="a d" style="left:506px;top:1080px;width:49px;height:19px;"></div>
<div class="t sm" style="left:510px;top:1082px;letter-spacing:-0.18px;line-height:8px">All Packages</div>
<div class="a tb" style="left:734px;top:1066px;width:147px;height:47px;"></div>
<div class="a td" style="left:739px;top:1071px;width:137px;height:37px;"></div>
<div class="a fr" style="left:743px;top:1075px;width:129px;height:29px;"></div>
<div class="a d" style="left:748px;top:1080px;width:35px;height:19px;"></div>
<div class="t sm" style="left:752px;top:1082px;letter-spacing:-0.43px;line-height:8px">FRAMES</div>
<div class="a d" style="left:788px;top:1080px;width:14px;height:19px;"></div>
<div class="a d" style="left:807px;top:1080px;width:47px;height:19px;"></div>
<div class="t sm" style="left:811px;top:1082px;letter-spacing:-0.33px;line-height:8px">NO FRAMES</div>
</div>
</div>
<div class="a" style="left:1337px;top:91px;width:1px;height:963px;background:#7a8a99"></div>
<div class="a" style="left:1338px;top:91px;width:14px;height:963px;background:#eee"></div>
<div class="a" style="left:1338px;top:91px;width:14px;height:15px;background:#eee;border-top:1px solid #fff;border-left:1px solid #fff"></div>
<svg class="a" style="left:1341px;top:95px" width="8" height="5" viewBox="0 0 8 5"><path d="M0 4.500L4 .3L8 4.500Z" fill="#222"/></svg>
<div class="a" style="left:1337px;top:106px;width:15px;height:343px;border:1px solid #6382bf;border-right:none;background:linear-gradient(90deg,#dbe6f2,#fff 30%,#c9d9ea 75%,#b8cfe5)"></div>
<div class="a" style="left:1341px;top:275px;width:9px;height:1px;background:#6382bf"></div>
<div class="a" style="left:1342px;top:276px;width:9px;height:1px;background:#fff"></div>
<div class="a" style="left:1341px;top:277px;width:9px;height:1px;background:#6382bf"></div>
<div class="a" style="left:1342px;top:278px;width:9px;height:1px;background:#fff"></div>
<div class="a" style="left:1341px;top:279px;width:9px;height:1px;background:#6382bf"></div>
<div class="a" style="left:1342px;top:280px;width:9px;height:1px;background:#fff"></div>
<div class="a" style="left:1338px;top:1036px;width:14px;height:16px;background:#eee;border-top:1px solid #7a8a99;box-shadow:inset 1px 1px 0 #fff"></div>
<svg class="a" style="left:1341px;top:1041px" width="8" height="5" viewBox="0 0 8 5"><path d="M0 .5L4 4.700L8 .5Z" fill="#222"/></svg>
</div>
</div>
<div class="a" style="left:1353px;top:90px;width:1px;height:964px;background:#fff"></div>
<div class="a" style="left:12px;top:1060px;width:818px;height:19px;border:1px solid #a0a0a0;box-shadow:inset 1px 1px 0 #fff,1px 1px 0 #fff"></div>
<div class="a" style="left:834px;top:1060px;width:523px;height:19px;border:1px solid #a0a0a0;box-shadow:inset 1px 1px 0 #fff,1px 1px 0 #fff"></div>
<div class="a" style="left:11px;top:1079px;width:1347px;height:2px;background:#fafafa"></div>
<div class="a" style="left:964px;top:332px;width:502px;height:481px;background:#eee;border:1px solid #66758a;box-shadow:0 4px 16px rgba(0,0,0,.35),0 0 4px rgba(0,0,0,.2)"></div>
<div class="a" style="left:964px;top:332px;width:502px;height:31px;background:#66758a"></div>
<svg class="a" style="left:973px;top:339px" width="16" height="16" viewBox="0 0 16 16"><defs><linearGradient id="jb2" x1="0" y1="0" x2="0" y2="1"><stop offset="0" stop-color="#8fb0d8"/><stop offset="1" stop-color="#27478a"/></linearGradient><linearGradient id="jf2" x1="0" y1="0" x2="0" y2="1"><stop offset="0" stop-color="#fff"/><stop offset="1" stop-color="#ececec"/></linearGradient></defs><rect x=".6" y=".6" width="14.800" height="14.800" rx="2.300" fill="url(#jf2)" stroke="url(#jb2)" stroke-width="1.200"/><path d="M9.600 2.700L6.500 7.100L7.600 8.800M10.900 4.700L8.400 8.400" fill="none" stroke="#e8740c" stroke-width="1.500" stroke-linecap="round" stroke-linejoin="round"/><path d="M4.100 9.500H10.400M5 11.400H9.700M3.300 13.500H11.900" fill="none" stroke="#3f6296" stroke-width="1.100"/><path d="M11.200 8.400Q14.300 8.500 13.700 10.100Q13.100 11.600 11.200 11.600" fill="none" stroke="#3f6296" stroke-width="1.200"/></svg>
<div class="t" style="left:994px;top:341px;font-size:12.300px;color:#fff;line-height:15px;letter-spacing:-.1px">Properties of navbar.tpl</div>
<svg class="a" style="left:1444px;top:341px" width="12" height="12" viewBox="0 0 12 12"><path d="M1 1l10 10M11 1L1 11" stroke="#fff" stroke-width="1.200" fill="none"/></svg>
<div class="a" style="left:965px;top:384px;width:500px;height:385px;border:1px solid;border-color:#6382bf #7a8a99 #7a8a99 #6382bf;background:#c8ddf2"></div>
<div class="a" style="left:966px;top:385px;width:498px;height:1px;background:#fff"></div>
<div class="a" style="left:966px;top:385px;width:1px;height:383px;background:#fff"></div>
<div class="a" style="left:967px;top:388px;width:495px;height:378px;background:#eee"></div>
<div class="a" style="left:967px;top:409px;width:495px;height:357px;border:1px solid;border-color:#6382bf #7a8a99 #7a8a99 #6382bf;background:#c8ddf2"></div>
<div class="a" style="left:968px;top:410px;width:493px;height:1px;background:#fff"></div>
<div class="a" style="left:968px;top:410px;width:1px;height:355px;background:#fff"></div>
<div class="a" style="left:971px;top:413px;width:488px;height:350px;background:#eee"></div>
<svg class="a" style="left:968px;top:365px" width="65" height="21" viewBox="0 0 65 21"><path d="M.5 19V6.500L6.500 .5H64.5V19Z" fill="#eee"/><path d="M.5 19V6.500L6.500 .5H64.5V19" fill="none" stroke="#7a8a99"/></svg>
<div class="t b" style="left:977px;top:368px;color:#222;line-height:14px">General</div>
<svg class="a" style="left:1033px;top:365px" width="89" height="21" viewBox="0 0 89 21"><path d="M.5 19V6.500L6.500 .5H88.5V19Z" fill="#eee"/><path d="M.5 19V6.500L6.500 .5H88.5V19" fill="none" stroke="#7a8a99"/></svg>
<div class="t b" style="left:1042px;top:368px;color:#222;line-height:14px">Parameters</div>
<svg class="a" style="left:1122px;top:365px" width="86" height="21" viewBox="0 0 86 21"><path d="M.5 19V6.500L6.500 .5H85.5V19Z" fill="#eee"/><path d="M.5 19V6.500L6.500 .5H85.5V19" fill="none" stroke="#7a8a99"/></svg>
<div class="t b" style="left:1132px;top:368px;color:#222;line-height:14px">Processing</div>
<svg class="a" style="left:1290px;top:365px" width="76" height="21" viewBox="0 0 76 21"><path d="M.5 19V6.500L6.500 .5H75.5V19Z" fill="#eee"/><path d="M.5 19V6.500L6.500 .5H75.5V19" fill="none" stroke="#7a8a99"/></svg>
<div class="t b" style="left:1300px;top:368px;color:#222;line-height:14px">Hypertext</div>
<svg class="a" style="left:1366px;top:365px" width="80" height="21" viewBox="0 0 80 21"><path d="M.5 19V6.500L6.500 .5H79.5V19Z" fill="#eee"/><path d="M.5 19V6.500L6.500 .5H79.5V19" fill="none" stroke="#7a8a99"/></svg>
<div class="t b" style="left:1375px;top:368px;color:#222;line-height:14px;letter-spacing:-.3px">Output File</div>
<svg class="a" style="left:1209px;top:365px" width="81" height="21" viewBox="0 0 81 21"><path d="M.5 19V6.500L6.500 .5H80.5V19V21H.5Z" fill="#c8ddf2"/><path d="M1.500 20V7L7 1.500H80" fill="none" stroke="#fff"/><path d="M.5 19V6.500L6.500 .5H80.5V19" fill="none" stroke="#6382bf"/><path d="M2.500 17.5V7.500L7.500 2.500H78.5V17.5Z" fill="none" stroke="#6382bf"/></svg>
<div class="t b" style="left:1218px;top:368px;color:#222;line-height:14px">Formatting</div>
<svg class="a" style="left:1090px;top:390px" width="116" height="21" viewBox="0 0 116 21"><path d="M.5 19V6.500L6.500 .5H115.5V19Z" fill="#eee"/><path d="M.5 19V6.500L6.500 .5H115.5V19" fill="none" stroke="#7a8a99"/></svg>
<div class="t b" style="left:1100px;top:393px;color:#222;line-height:14px">Embedded HTML</div>
<svg class="a" style="left:1206px;top:390px" width="100" height="21" viewBox="0 0 100 21"><path d="M.5 19V6.500L6.500 .5H99.5V19Z" fill="#eee"/><path d="M.5 19V6.500L6.500 .5H99.5V19" fill="none" stroke="#7a8a99"/></svg>
<div class="t b" style="left:1216px;top:393px;color:#222;line-height:14px">Page Settings</div>
<svg class="a" style="left:1306px;top:390px" width="52" height="21" viewBox="0 0 52 21"><path d="M.5 19V6.500L6.500 .5H51.5V19Z" fill="#eee"/><path d="M.5 19V6.500L6.500 .5H51.5V19" fill="none" stroke="#7a8a99"/></svg>
<div class="t b" style="left:1315px;top:393px;color:#222;line-height:14px">Other</div>
<svg class="a" style="left:969px;top:390px" width="121" height="21" viewBox="0 0 121 21"><path d="M.5 19V6.500L6.500 .5H120.5V19V21H.5Z" fill="#c8ddf2"/><path d="M1.500 20V7L7 1.500H120" fill="none" stroke="#fff"/><path d="M.5 19V6.500L6.500 .5H120.5V19" fill="none" stroke="#6382bf"/></svg>
<div class="t b" style="left:979px;top:393px;color:#222;line-height:14px">Formatting Styles</div>
<div class="a" style="left:972px;top:416px;width:419px;height:307px;border:1px solid #7a8a99;background:#fff"></div>
<div class="a" style="left:973px;top:417px;width:417px;height:18px;background:#b8cfe5"></div>
<div class="t b" style="left:976px;top:420px;font-size:11px;line-height:12px;color:#000"><u>a</u></div>
<div class="t" style="left:989px;top:420px;color:#333;line-height:14px;letter-spacing:.035px"><u>Default Paragraph Font</u></div>
<div class="t b" style="left:976px;top:438px;font-size:11px;line-height:12px;color:#000"><u>a</u></div>
<div class="t" style="left:989px;top:438px;color:#333;line-height:14px;letter-spacing:.035px">Hyperlink</div>
<svg class="a" style="left:975px;top:457px" width="10" height="10" viewBox="0 0 10 10"><path d="M.5 .5H9.500V9.500H.5ZM3.500 .5V9.500M6.500 .5V9.500M.5 3.500H9.500M.5 6.500H9.500" fill="#fff" stroke="#b0b0b0"/><rect x="3.500" y="3.500" width="3" height="3" fill="#fff" stroke="#000"/></svg>
<div class="t" style="left:989px;top:456px;color:#333;line-height:14px;letter-spacing:.035px">NavBar Bottom Menu</div>
<div class="t b" style="left:976px;top:474px;font-size:11px;line-height:12px;color:#000"><u>a</u></div>
<div class="t" style="left:989px;top:474px;color:#333;line-height:14px;letter-spacing:.035px">NavBar Item</div>
<div class="t b" style="left:976px;top:492px;font-size:11px;line-height:12px;color:#000"><u>a</u></div>
<div class="t" style="left:989px;top:492px;color:#333;line-height:14px;letter-spacing:.035px">NavBar Item Hyperlink</div>
<svg class="a" style="left:975px;top:511px" width="10" height="10" viewBox="0 0 10 10"><path d="M.5 .5H9.500V9.500H.5ZM3.500 .5V9.500M6.500 .5V9.500M.5 3.500H9.500M.5 6.500H9.500" fill="#fff" stroke="#b0b0b0"/><rect x="3.500" y="3.500" width="3" height="3" fill="#fff" stroke="#000"/></svg>
<div class="t" style="left:989px;top:510px;color:#333;line-height:14px;letter-spacing:.035px">NavBar Mid Left Menu 1</div>
<svg class="a" style="left:975px;top:529px" width="10" height="10" viewBox="0 0 10 10"><path d="M.5 .5H9.500V9.500H.5ZM3.500 .5V9.500M6.500 .5V9.500M.5 3.500H9.500M.5 6.500H9.500" fill="#fff" stroke="#b0b0b0"/><rect x="3.500" y="3.500" width="3" height="3" fill="#fff" stroke="#000"/></svg>
<div class="t" style="left:989px;top:528px;color:#333;line-height:14px;letter-spacing:.035px">NavBar Mid Left Menu 2</div>
<svg class="a" style="left:975px;top:547px" width="10" height="10" viewBox="0 0 10 10"><path d="M.5 .5H9.500V9.500H.5ZM3.500 .5V9.500M6.500 .5V9.500M.5 3.500H9.500M.5 6.500H9.500" fill="#fff" stroke="#b0b0b0"/><rect x="3.500" y="3.500" width="3" height="3" fill="#fff" stroke="#000"/></svg>
<div class="t" style="left:989px;top:546px;color:#333;line-height:14px;letter-spacing:.035px">NavBar Mid Right Menu 1</div>
<svg class="a" style="left:975px;top:565px" width="10" height="10" viewBox="0 0 10 10"><path d="M0 2.500H10M0 7.500H10" stroke="#b0b0b0" stroke-dasharray="1 1"/><path d="M0 5H10" stroke="#555" stroke-width="1.400"/></svg>
<div class="t" style="left:989px;top:564px;color:#333;line-height:14px;letter-spacing:.035px">NavBar Rule</div>
<div class="t b" style="left:976px;top:582px;font-size:11px;line-height:12px;color:#000"><u>a</u></div>
<div class="t" style="left:989px;top:582px;color:#333;line-height:14px;letter-spacing:.035px">NavBar Text</div>
<div class="t b" style="left:976px;top:600px;font-size:11px;line-height:12px;color:#000"><u>a</u></div>
<div class="t" style="left:989px;top:600px;color:#333;line-height:14px;letter-spacing:.035px">NavBar Top Item</div>
<div class="t b" style="left:976px;top:618px;font-size:11px;line-height:12px;color:#000"><u>a</u></div>
<div class="t" style="left:989px;top:618px;color:#333;line-height:14px;letter-spacing:.035px">NavBar Top Item Hyperlink</div>
<div class="t b" style="left:976px;top:636px;font-size:11px;line-height:12px;color:#000"><u>a</u></div>
<div class="t" style="left:989px;top:636px;color:#333;line-height:14px;letter-spacing:.035px">NavBar Top Item Selected</div>
<svg class="a" style="left:975px;top:655px" width="10" height="10" viewBox="0 0 10 10"><path d="M.5 .5H9.500V9.500H.5ZM3.500 .5V9.500M6.500 .5V9.500M.5 3.500H9.500M.5 6.500H9.500" fill="#fff" stroke="#b0b0b0"/><rect x="3.500" y="3.500" width="3" height="3" fill="#fff" stroke="#000"/></svg>
<div class="t" style="left:989px;top:654px;color:#333;line-height:14px;letter-spacing:.035px">NavBar Top Item Selected Bkgr</div>
<svg class="a" style="left:975px;top:673px" width="10" height="10" viewBox="0 0 10 10"><path d="M.5 .5H9.500V9.500H.5ZM3.500 .5V9.500M6.500 .5V9.500M.5 3.500H9.500M.5 6.500H9.500" fill="#fff" stroke="#b0b0b0"/><rect x="3.500" y="3.500" width="3" height="3" fill="#fff" stroke="#000"/></svg>
<div class="t" style="left:989px;top:672px;color:#333;line-height:14px;letter-spacing:.035px">NavBar Top Menu</div>
<div class="t b" style="left:976px;top:690px;font-size:11px;line-height:12px;color:#000">¶</div>
<div class="t" style="left:989px;top:690px;color:#333;line-height:14px;letter-spacing:.035px"><u>Normal</u></div>
<div class="t b" style="left:973px;top:737px;color:#5a62a8;line-height:14px;letter-spacing:-.22px">Default Style:</div>
<div class="a" style="left:1055px;top:731px;width:337px;height:25px;border:1px solid #7a8a99;background:#eee"></div>
<div class="a" style="left:1372px;top:732px;width:19px;height:23px;border-left:1px solid #7a8a99;background:linear-gradient(#e4edf7,#fff 35%,#b8cfe5)"></div>
<svg class="a" style="left:1377px;top:741px" width="10" height="6" viewBox="0 0 10 6"><path d="M0 .3H10L5 5.500Z" fill="#222"/></svg>
<div class="t b" style="left:1060px;top:736px;font-size:11px;line-height:12px;color:#000">¶</div>
<div class="t b" style="left:1072px;top:737px;color:#222;line-height:14px"><u>Normal</u></div>
<div class="a" style="left:1397px;top:479px;width:58px;height:26px;border:1px solid #7a8a99;background:linear-gradient(#dde8f3,#fff 28%,#e3ecf6 55%,#b8cfe5);box-shadow:inset 1px 1px 0 #fff"></div>
<div class="a b" style="left:1397px;top:479px;width:58px;height:26px;line-height:28px;text-align:center;color:#222">New...</div>
<div class="a" style="left:1397px;top:510px;width:58px;height:26px;border:1px solid #7a8a99;background:linear-gradient(#dde8f3,#fff 28%,#e3ecf6 55%,#b8cfe5);box-shadow:inset 1px 1px 0 #fff"></div>
<div class="a b" style="left:1397px;top:510px;width:58px;height:26px;line-height:28px;text-align:center;color:#222">Edit...</div>
<div class="a" style="left:1397px;top:541px;width:58px;height:26px;border:1px solid #7a8a99;background:linear-gradient(#dde8f3,#fff 28%,#e3ecf6 55%,#b8cfe5);box-shadow:inset 1px 1px 0 #fff"></div>
<div class="a b" style="left:1397px;top:541px;width:58px;height:26px;line-height:28px;text-align:center;color:#222">Copy</div>
<div class="a" style="left:1397px;top:572px;width:58px;height:26px;border:1px solid #7a8a99;background:linear-gradient(#dde8f3,#fff 28%,#e3ecf6 55%,#b8cfe5);box-shadow:inset 1px 1px 0 #fff"></div>
<div class="a b" style="left:1397px;top:572px;width:58px;height:26px;line-height:28px;text-align:center;color:#222">Clone</div>
<div class="a" style="left:1397px;top:603px;width:58px;height:26px;border:1px solid #9a9a9a;background:#eee"></div>
<div class="a b" style="left:1397px;top:603px;width:58px;height:26px;line-height:28px;text-align:center;color:#999">Paste</div>
<div class="a" style="left:1397px;top:634px;width:58px;height:26px;border:1px solid #7a8a99;background:linear-gradient(#dde8f3,#fff 28%,#e3ecf6 55%,#b8cfe5);box-shadow:inset 1px 1px 0 #fff"></div>
<div class="a b" style="left:1397px;top:634px;width:58px;height:26px;line-height:28px;text-align:center;color:#222">Delete</div>
<div class="a" style="left:1100px;top:779px;width:73px;height:26px;border:1px solid #7a8a99;background:linear-gradient(#dde8f3,#fff 28%,#e3ecf6 55%,#b8cfe5);box-shadow:inset 1px 1px 0 #fff,inset 0 0 0 1px #7a8a99"></div>
<div class="a b" style="left:1100px;top:779px;width:73px;height:26px;line-height:28px;text-align:center;color:#222">OK</div>
<div class="a" style="left:1178px;top:779px;width:73px;height:26px;border:1px solid #7a8a99;background:linear-gradient(#dde8f3,#fff 28%,#e3ecf6 55%,#b8cfe5);box-shadow:inset 1px 1px 0 #fff"></div>
<div class="a b" style="left:1178px;top:779px;width:73px;height:26px;line-height:28px;text-align:center;color:#222">Cancel</div>
<div class="a" style="left:1256px;top:779px;width:73px;height:26px;border:1px solid #7a8a99;background:linear-gradient(#dde8f3,#fff 28%,#e3ecf6 55%,#b8cfe5);box-shadow:inset 1px 1px 0 #fff"></div>
<div class="a b" style="left:1256px;top:779px;width:73px;height:26px;line-height:28px;text-align:center;color:#222"><u>A</u>pply</div>
</body></html>
